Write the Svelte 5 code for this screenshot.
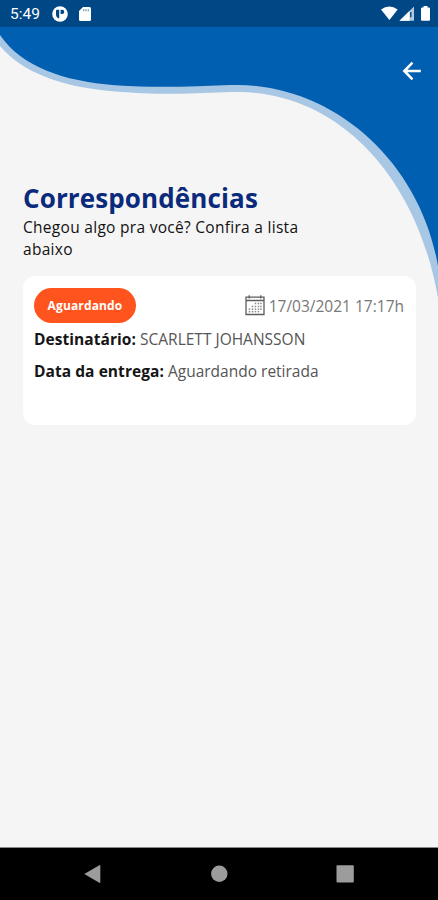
<script>
  const item = {
    status: 'Aguardando',
    date: '17/03/2021 17:17h',
    recipient: 'SCARLETT JOHANSSON',
    delivery: 'Aguardando retirada'
  };
  const calendarDots = [
    [10.5, 8.5], [13.5, 8.5], [16, 8.5],
    [7.5, 11.5], [10.5, 11.5], [13.5, 11.5], [16, 11.5],
    [4.5, 14.2], [7.5, 14.2], [10.5, 14.2], [13.5, 14.2], [16, 14.2],
    [4.5, 16.7], [7.5, 16.7], [10.5, 16.7], [13.5, 16.7]
  ];
</script>

<div class="screen">
  <svg class="wave" width="438" height="310" viewBox="0 0 438 310" aria-hidden="true">
    <path fill="#a8c7e4" d="M0 27V46C22 72 60 87 115 91.5C140 93.5 160 94 180 93.7C205 93.3 220 91.9 240 92C335 93 416 172 438 298V27Z" />
    <path fill="#005fb0" d="M0 27V35C22 67 63 81 115 85.2C140 87 160 87 180 86.7C205 86.3 217 85 238 85C335 86 420 162 438 266V27Z" />
  </svg>

  <header class="status">
    <span class="time">5:49</span>
    <svg class="app" width="16" height="16" viewBox="0 0 16 16">
      <circle cx="8" cy="8" r="7.8" fill="#fff" />
      <path fill="#004785" d="M4 4.8Q4 3.8 5 3.8H7.2V12.4C5.2 12.2 4 10.5 4 8.5ZM8.6 3.8H10.2A2.1 2.1 0 0 1 10.2 8H8.6Z" />
    </svg>
    <svg class="sd" width="12" height="14" viewBox="0 0 12 14">
      <path fill="#fff" d="M4 0H10.5Q12 0 12 1.5V12.5Q12 14 10.5 14H1.5Q0 14 0 12.5V4Z" />
      <path stroke="#6f91b5" stroke-width="1.2" d="M4.7 2.2V4.2M7 2.2V4.2M9.3 2.2V4.2" />
    </svg>
    <svg class="signals" width="50" height="16" viewBox="0 0 50 16">
      <path fill="#fff" d="M0 3.5Q8.3-2.7 16.7 3.5L8.4 14Z" />
      <path fill="#b5c8dc" d="M18.5 14.7L33 .5V14.7Z" />
      <path fill="#fff" d="M18.5 14.7L28.5 4.9V14.7Z" />
      <path stroke="#004785" stroke-width="1.4" d="M29.8 6V11.2" />
      <path fill="#fff" d="M42.5 0H46.5V1.5H48Q49 1.5 49 2.5V13.7Q49 14.7 48 14.7H41Q40 14.7 40 13.7V2.5Q40 1.5 41 1.5H42.5Z" />
    </svg>
  </header>

  <nav class="toolbar">
    <button aria-label="Voltar">
      <svg width="20" height="20" viewBox="0 0 20 20">
        <path fill="none" stroke="#fff" stroke-width="2.5" d="M18.8 10H2.5M10.5 1.7L2.3 10L10.5 18.3" />
      </svg>
    </button>
  </nav>

  <main>
    <h1>Correspondências</h1>
    <p class="intro">Chegou algo pra você? Confira a lista abaixo</p>

    <article class="card">
      <div class="top">
        <span class="badge">{item.status}</span>
        <svg class="calendar" width="20" height="21" viewBox="0 0 20 21">
          <path fill="none" stroke="#5d5d5d" stroke-width="1.3" d="M1 2.2H19V19.5H1ZM1 5.5H19M4.2.3V3.5M15.8.3V3.5" />
          {#each calendarDots as [x, y]}
            <rect x={x - .8} y={y - .8} width="1.5" height="1.5" fill="#8a8a8a" />
          {/each}
        </svg>
        <span class="date">{item.date}</span>
      </div>
      <p class="row"><b>Destinatário:</b> <span>{item.recipient}</span></p>
      <p class="row last"><b>Data da entrega:</b> <span>{item.delivery}</span></p>
    </article>
  </main>

  <footer>
    <svg width="438" height="52" viewBox="0 0 438 52" fill="#9c9c9c">
      <path d="M84.3 26L99.3 17.2Q100.3 16.8 100.3 18V34Q100.3 35.2 99.3 34.8Z" />
      <circle cx="219.3" cy="25.7" r="8.2" />
      <rect x="336.5" y="17.3" width="17.3" height="17.3" rx="1" />
    </svg>
  </footer>
</div>

<style>
  :global(body) { margin: 0; }
  .screen {
    position: relative;
    display: flex;
    flex-direction: column;
    width: 438px;
    height: 900px;
    overflow: hidden;
    background: #f5f5f5;
    font-family: "Open Sans", sans-serif;
  }
  .wave { position: absolute; top: 0; left: 0; }
  .status {
    position: relative;
    display: flex;
    align-items: center;
    box-sizing: border-box;
    height: 27px;
    padding: 1px 7.5px 0 10px;
    background: #004785;
    color: #fff;
  }
  .time { width: 42px; font: 400 15.5px/26px Roboto, sans-serif; }
  .sd { margin-left: 10.5px; }
  .signals { margin-left: auto; }
  .toolbar {
    position: relative;
    display: flex;
    justify-content: flex-end;
    height: 83px;
    box-sizing: border-box;
    padding: 34px 16px 0 0;
  }
  button { width: 20px; height: 20px; padding: 0; border: 0; background: none; }
  button svg { display: block; }
  main { position: relative; flex: 1; padding: 70px 22px 0 23px; }
  h1 {
    margin: 0;
    font-size: 26px;
    line-height: 36px;
    font-weight: 700;
    letter-spacing: .12px;
    color: #0b2a7b;
    white-space: nowrap;
  }
  .intro {
    width: 300px;
    margin: 1px 0 0;
    font-size: 15.5px;
    line-height: 21.5px;
    font-weight: 400;
    letter-spacing: .29px;
    color: #111;
  }
  .card {
    box-sizing: border-box;
    width: 393px;
    height: 149px;
    margin-top: 16px;
    padding: 12px 12px 0 11px;
    border-radius: 12px;
    background: #fff;
  }
  .top { display: flex; align-items: center; height: 35px; }
  .badge {
    width: 102px;
    height: 35px;
    border-radius: 18px;
    background: #ff541d;
    color: #fff;
    font-size: 12px;
    line-height: 36px;
    font-weight: 700;
    letter-spacing: .15px;
    text-align: center;
  }
  .calendar { margin-left: auto; margin-right: 4px; }
  .date { font-size: 15.5px; font-weight: 400; color: #777; white-space: nowrap; }
  .row { margin: 0; font-size: 15.5px; line-height: 32px; font-weight: 400; color: #555; white-space: nowrap; }
  .row b { font-weight: 700; letter-spacing: .06px; color: #151515; }
  .last { margin-top: -.5px; }
  footer { height: 53px; background: #000; border-top: 1px solid #888; box-sizing: border-box; }
  footer svg { display: block; }
</style>
